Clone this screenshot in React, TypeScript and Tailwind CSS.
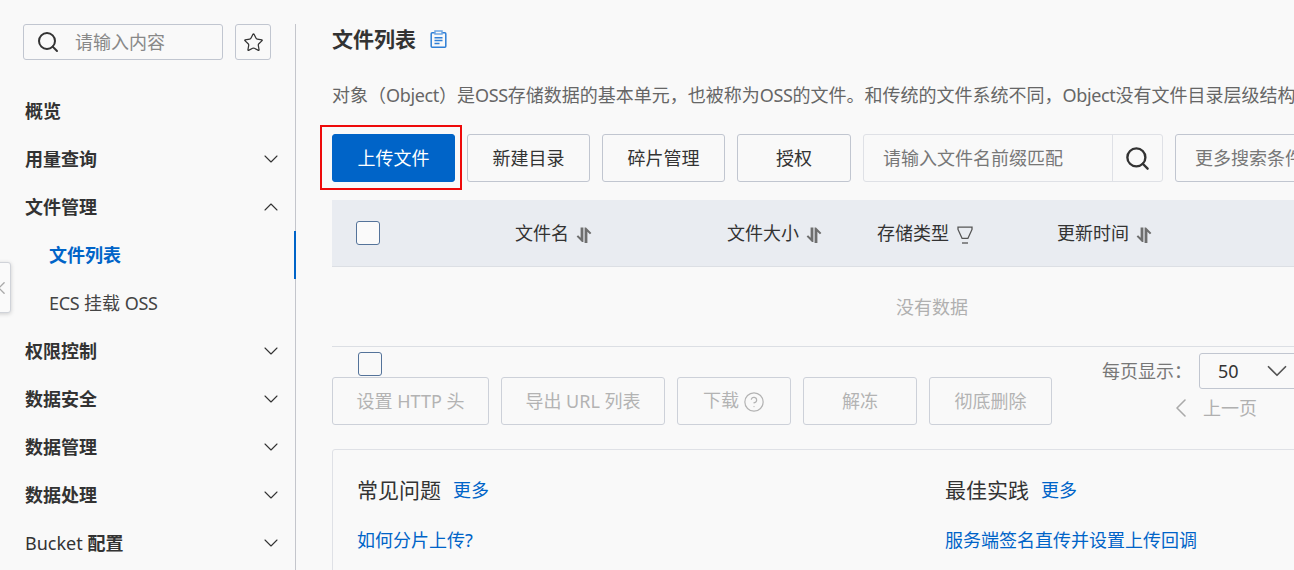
import React from "react";
import { ChevronDown, ChevronLeft, ChevronUp, CircleHelp, Search, Star } from "lucide-react";

const FONT = "[font-family:'Noto_Sans','Noto_Sans_CJK_SC',sans-serif]";

function SortIcon() {
  return (
    <svg width="16" height="18" viewBox="0 0 16 18" className="ml-[7px] mt-1 shrink-0" fill="#6e6e6e">
      <path d="M4.6 1.5h2.8V16H6L.6 10.6l1.5-1.3 2.5 2.5z" />
      <path d="M8.6 1.5H10l5.4 5.4-1.5 1.3-2.5-2.5V17H8.6z" />
    </svg>
  );
}

function FilterIcon() {
  return (
    <svg width="16" height="20" viewBox="0 0 16 20" className="ml-2 mt-1 shrink-0" fill="none" stroke="#555" strokeWidth="1.3">
      <path d="M1 2.2h14v2.2l-4.1 9H5.1L1 4.4z" />
      <path d="M5 18h6" />
    </svg>
  );
}

function DocIcon() {
  return (
    <svg width="17" height="18" viewBox="0 0 17 18" className="ml-[14px] shrink-0" fill="none" stroke="#2f7fd6" strokeWidth="1.5">
      <rect x="1.2" y="2.8" width="14.6" height="14.4" rx="1" />
      <rect x="5" y="1" width="7" height="3" fill="#f9f9f9" stroke="#6ea6e4" />
      <path d="M4.5 7.8h8M4.5 10.6h8M4.5 13.4h5" />
    </svg>
  );
}

function NavItem({ label, icon }: { label: React.ReactNode; icon?: "down" | "up" }) {
  return (
    <div className="flex h-12 items-center justify-between pl-[25px] pr-[12px] font-bold text-[#333]">
      <span>{label}</span>
      {icon === "down" && <ChevronDown size={24} strokeWidth={1.1} />}
      {icon === "up" && <ChevronUp size={24} strokeWidth={1.1} />}
    </div>
  );
}

function Button({ w, children, disabled, primary }: { w: string; children: React.ReactNode; disabled?: boolean; primary?: boolean }) {
  const tone = primary
    ? "border-[#0064c8] bg-[#0064c8] text-white"
    : disabled
      ? "border-[#cdd1d9] text-[#b3b3b3]"
      : "border-[#c1c6d0] text-[#333]";
  return (
    <div className={`flex h-12 shrink-0 items-center justify-center rounded-[3px] border ${tone} ${w}`}>{children}</div>
  );
}

export default function App() {
  return (
    <div className={`relative flex h-[570px] w-[1294px] overflow-hidden bg-[#f9f9f9] text-[18px] leading-6 text-[#333] ${FONT}`}>
      <aside className="flex h-full w-[296px] shrink-0 flex-col pt-6">
        <div className="relative flex h-[546px] flex-col border-r border-[#c4c6cc]">
          <div className="flex gap-3 pl-[23px]">
            <div className="flex h-9 w-[200px] items-center rounded-[3px] border border-[#c1c6d0] pl-[12px]">
              <Search size={24} strokeWidth={2} className="text-[#333]" />
              <span className="ml-[15px] text-[#888]">请输入内容</span>
            </div>
            <div className="flex h-9 w-9 items-center justify-center rounded-[3px] border border-[#c1c6d0]">
              <Star size={21} strokeWidth={1.4} />
            </div>
          </div>
          <div className="mt-[27px]">
            <NavItem label="概览" />
            <NavItem label="用量查询" icon="down" />
            <NavItem label="文件管理" icon="up" />
            <div className="-mr-px flex h-12 items-center border-r-2 border-[#0064c8] pl-[49px] font-bold text-[#0064c8]">文件列表</div>
            <div className="flex h-12 items-center pl-[49px] text-[#444]"><span className="tracking-[-0.3px]">ECS</span><span>&nbsp;挂载&nbsp;</span><span className="tracking-[-0.3px]">OSS</span></div>
            <NavItem label="权限控制" icon="down" />
            <NavItem label="数据安全" icon="down" />
            <NavItem label="数据管理" icon="down" />
            <NavItem label="数据处理" icon="down" />
            <NavItem label={<><span className="font-normal">Bucket </span>配置</>} icon="down" />
          </div>
        </div>
      </aside>

      <main className="ml-9 flex w-[1200px] shrink-0 flex-col">
        <div className="mt-[27px] flex h-6 shrink-0 items-center">
          <h1 className="text-[21px] font-bold text-[#333]">文件列表</h1>
          <DocIcon />
        </div>
        <p className="mt-[32px] h-6 shrink-0 whitespace-nowrap text-[#666]">
          对象（<span className="tracking-[-0.35px]">Object</span>）是<span className="tracking-[-0.35px]">OSS</span>存储数据的基本单元，也被称为<span className="tracking-[-0.35px]">OSS</span>的文件。和传统的文件系统不同，<span className="tracking-[-0.35px]">Object</span>没有文件目录层级结构的关系。
        </p>

        <div className="relative mt-[27px] flex h-12 shrink-0 gap-3">
          <Button w="w-[123px]" primary>上传文件</Button>
          <Button w="w-[123px]">新建目录</Button>
          <Button w="w-[123px]">碎片管理</Button>
          <Button w="w-[114px]">授权</Button>
          <div className="flex h-12 w-[300px] shrink-0 rounded-[3px] border border-[#dfe1e6]">
            <div className="flex flex-1 items-center pl-[19px] text-[#777]">请输入文件名前缀匹配</div>
            <div className="flex w-[50px] items-center justify-center border-l border-[#dfe1e6]">
              <Search size={27} strokeWidth={2.1} />
            </div>
          </div>
          <div className="flex h-12 w-[200px] shrink-0 items-center rounded-[3px] border border-[#c1c6d0] pl-[19px] text-[#777]">更多搜索条件</div>
          <div className="absolute -left-3 -top-[9px] h-[65px] w-[142px] border-2 border-[#ee0a0a]" />
        </div>

        <div className="mt-[18px] flex h-[67px] shrink-0 items-center border-b border-[#dcdfe4] bg-[#e9ecf1] pl-6">
          <div className="h-6 w-6 rounded-[3px] border border-[#54739a] bg-[#fafafa]" />
          <div className="ml-[135px] flex w-[212px] items-center"><span>文件名</span><SortIcon /></div>
          <div className="flex w-[150px] items-center"><span>文件大小</span><SortIcon /></div>
          <div className="flex w-[180px] items-center"><span>存储类型</span><FilterIcon /></div>
          <div className="flex items-center"><span>更新时间</span><SortIcon /></div>
        </div>

        <div className="flex h-[80px] shrink-0 items-center justify-center border-b border-[#dcdfe4] text-[#b0b0b0]">
          <span>没有数据</span>
        </div>

        <div className="flex h-[78px] shrink-0">
          <div className="flex w-[720px] flex-col">
            <div className="ml-[26px] mt-[5px] h-6 w-6 rounded-[3px] border border-[#54739a]" />
            <div className="mt-px flex gap-3">
              <Button w="w-[157px]" disabled>设置 HTTP 头</Button>
              <Button w="w-[164px]" disabled>导出 URL 列表</Button>
              <Button w="w-[114px]" disabled>
                <span className="-mt-0.5">下载</span>
                <CircleHelp size={22} strokeWidth={1.3} className="ml-1 mt-0.5" />
              </Button>
              <Button w="w-[114px]" disabled>解冻</Button>
              <Button w="w-[123px]" disabled>彻底删除</Button>
            </div>
          </div>
          <div className="ml-[50px] flex flex-col">
            <div className="mt-[6px] flex items-center">
              <span className="text-[#777]">每页显示：</span>
              <div className="ml-[7px] flex h-[36px] w-[120px] items-center rounded-[3px] border border-[#c1c6d0] pl-[18px]">
                <span>50</span>
                <ChevronDown size={34} strokeWidth={1.2} className="ml-[21px] text-[#555]" />
              </div>
            </div>
            <div className="ml-[63px] mt-[7px] flex h-6 items-center text-[#b0b0b0]">
              <ChevronLeft size={32} strokeWidth={1.2} className="text-[#aaa]" />
              <span className="ml-[6px]">上一页</span>
            </div>
          </div>
        </div>

        <section className="mt-6 flex h-[200px] shrink-0 rounded-t-[3px] border border-[#dfe1e6] px-[24px] pt-7">
          <div className="w-[588px] shrink-0">
            <div className="flex items-center">
              <span className="text-[21px] text-[#333]">常见问题</span>
              <span className="ml-3 text-[#0064c8]">更多</span>
            </div>
            <div className="mt-[26px] text-[#0064c8]">如何分片上传?</div>
          </div>
          <div>
            <div className="flex items-center">
              <span className="text-[21px] text-[#333]">最佳实践</span>
              <span className="ml-3 text-[#0064c8]">更多</span>
            </div>
            <div className="mt-[26px] whitespace-nowrap text-[#0064c8]">服务端签名直传并设置上传回调</div>
          </div>
        </section>
      </main>

      <div className="absolute left-[-10px] top-[262px] flex h-[51px] w-[21px] items-center justify-end rounded-[3px] border border-[#d0d3d9] bg-[#fafafa] shadow-[0_1px_4px_rgba(0,0,0,0.18)]">
        <ChevronLeft size={26} strokeWidth={1.6} className="-mr-[2px] text-[#aaa]" />
      </div>
    </div>
  );
}
